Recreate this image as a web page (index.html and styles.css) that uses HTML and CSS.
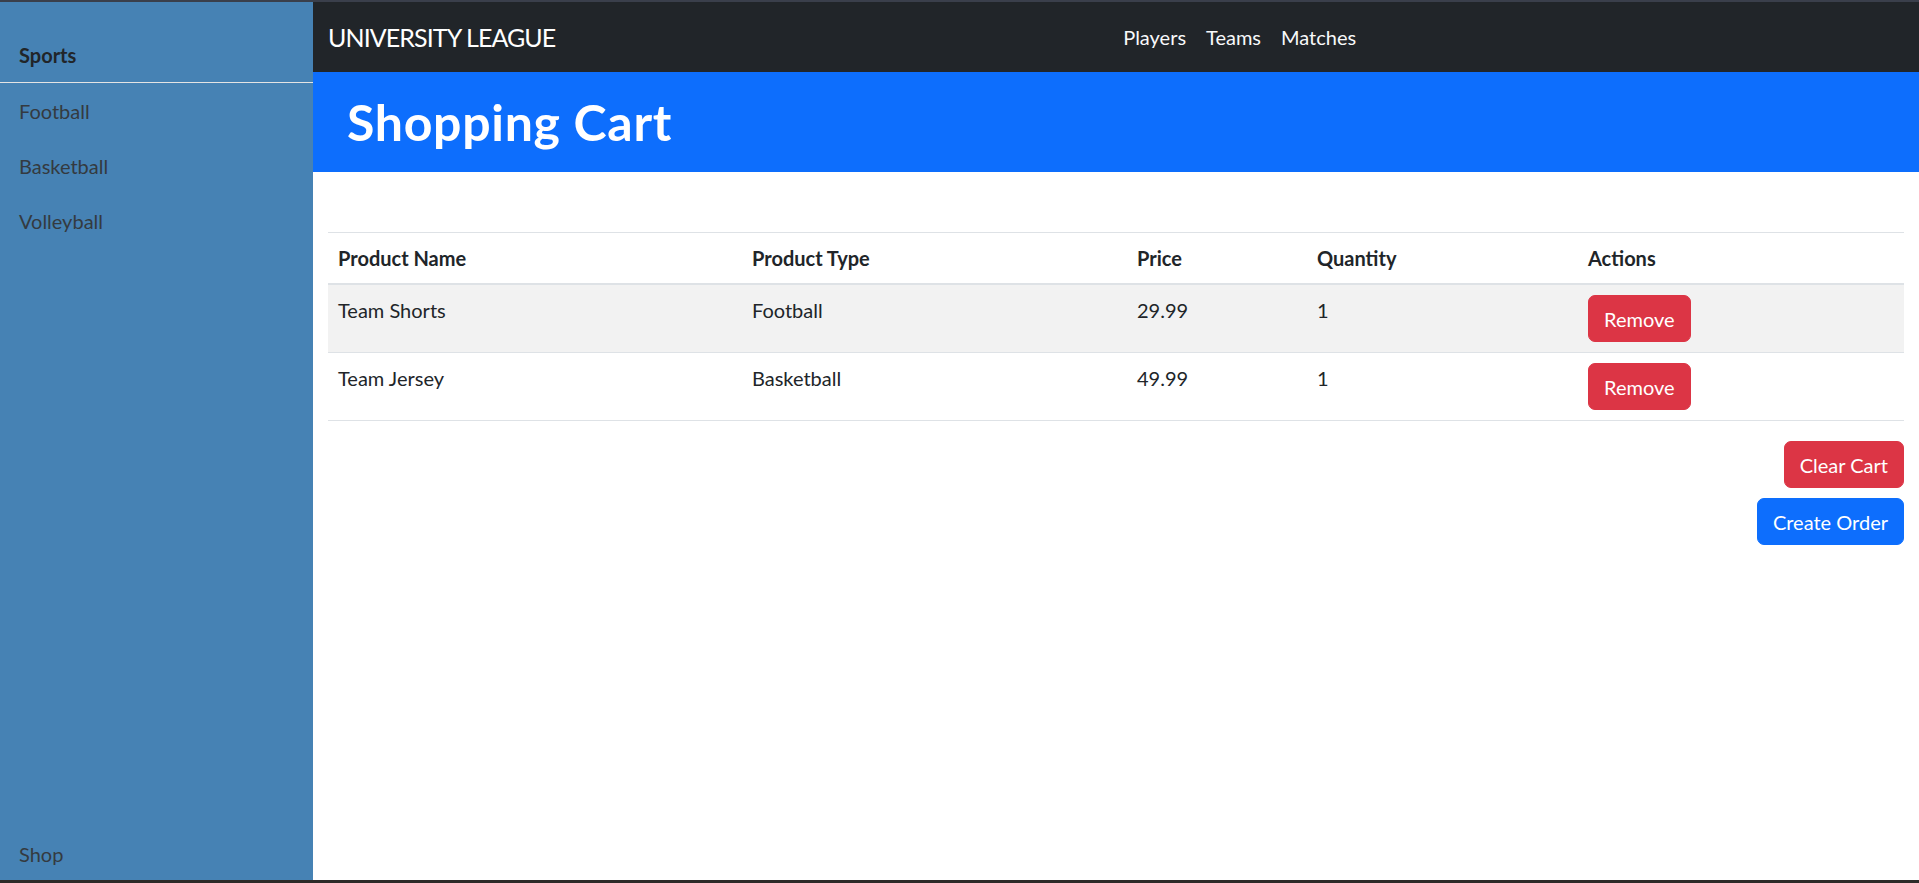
FILE: index.html
```html
<!DOCTYPE html>
<html lang="en">
<head>
<meta charset="utf-8">
<title>Shopping Cart</title>
<link rel="stylesheet" href="styles.css">
</head>
<body>
<div class="screen">
  <div class="frame-top"></div>
  <div class="app">
    <aside class="sidebar">
      <div class="side-title">Sports</div>
      <ul class="side-nav">
        <li class="side-item">Football</li>
        <li class="side-item">Basketball</li>
        <li class="side-item">Volleyball</li>
      </ul>
      <div class="side-foot">Shop</div>
    </aside>
    <div class="main">
      <nav class="topbar">
        <span class="brand">UNIVERSITY LEAGUE</span>
        <ul class="top-links">
          <li class="top-link">Players</li>
          <li class="top-link">Teams</li>
          <li class="top-link">Matches</li>
        </ul>
      </nav>
      <header class="hero">
        <h1 class="hero-title">Shopping Cart</h1>
      </header>
      <section class="content">
        <table class="cart">
          <colgroup>
            <col class="c-name">
            <col class="c-type">
            <col class="c-price">
            <col class="c-qty">
            <col class="c-act">
          </colgroup>
          <thead>
            <tr>
              <th>Product Name</th>
              <th>Product Type</th>
              <th>Price</th>
              <th>Quantity</th>
              <th>Actions</th>
            </tr>
          </thead>
          <tbody>
            <tr class="striped">
              <td>Team Shorts</td>
              <td>Football</td>
              <td>29.99</td>
              <td>1</td>
              <td><button class="btn btn-danger">Remove</button></td>
            </tr>
            <tr>
              <td>Team Jersey</td>
              <td>Basketball</td>
              <td>49.99</td>
              <td>1</td>
              <td><button class="btn btn-danger">Remove</button></td>
            </tr>
          </tbody>
        </table>
        <div class="cart-actions">
          <button class="btn btn-danger">Clear Cart</button>
          <button class="btn btn-primary">Create Order</button>
        </div>
      </section>
    </div>
  </div>
  <div class="taskbar"></div>
</div>
</body>
</html>
```

FILE: styles.css
```css
* { box-sizing: border-box; }

html, body {
  margin: 0;
  padding: 0;
  height: 883px;
  overflow: hidden;
  background: #fff;
}

body {
  font-family: Lato, "Noto Sans", "Liberation Sans", sans-serif;
  font-size: 20px;
  line-height: 30px;
  color: #212529;
}

.screen {
  display: flex;
  flex-direction: column;
  height: 883px;
}

.frame-top {
  height: 2px;
  background: #3a3f4b;
  flex: none;
}

.taskbar {
  height: 3px;
  background: #2d2a28;
  flex: none;
}

.app {
  flex: 1;
  display: flex;
  min-height: 0;
}

/* Sidebar */
.sidebar {
  width: 313px;
  flex: none;
  background: #4682b4;
  display: flex;
  flex-direction: column;
}

.side-title {
  padding: 38px 20px 12px 19px;
  font-weight: 700;
  color: #212529;
  border-bottom: 1px solid #e4e4e4;
}

.side-nav {
  list-style: none;
  margin: 0;
  padding: 0;
}

.side-item {
  padding: 13px 20px 12px 19px;
  color: #343a40;
}

.side-foot {
  margin-top: auto;
  padding: 0 20px 11px 19px;
  color: #343a40;
}

/* Main */
.main {
  flex: 1;
  display: flex;
  flex-direction: column;
  min-width: 0;
}

.topbar {
  height: 70px;
  flex: none;
  background: #212529;
  display: flex;
  align-items: center;
  padding: 0 15px;
}

.brand {
  font-size: 25px;
  line-height: 37px;
  letter-spacing: -0.9px;
  color: #fff;
  margin-right: 20px;
}

.top-links {
  list-style: none;
  display: flex;
  margin: 0 auto;
  padding: 0;
}

.top-link {
  padding: 0 10px;
  color: #f8f9fa;
}

.hero {
  height: 100px;
  flex: none;
  background: #0d6efd;
  display: flex;
  align-items: center;
  padding: 0 34px;
}

.hero-title {
  margin: 0;
  font-size: 50px;
  line-height: 60px;
  font-weight: 700;
  letter-spacing: 0.7px;
  color: #fff;
}

.content {
  padding: 60px 15px 0;
}

/* Table */
.cart {
  width: 100%;
  border-collapse: collapse;
  table-layout: fixed;
  border-top: 1px solid #dee2e6;
  margin-bottom: 20px;
}

.c-name { width: 414px; }
.c-type { width: 385px; }
.c-price { width: 180px; }
.c-qty { width: 271px; }
.c-act { width: auto; }

.cart th,
.cart td {
  padding: 10px;
  text-align: left;
  vertical-align: top;
}

.cart th {
  font-weight: 700;
  border-bottom: 2px solid #dee2e6;
}

.cart td {
  border-bottom: 1px solid #dee2e6;
}

.cart .striped td {
  background: #f2f2f2;
}

.btn {
  font-family: inherit;
  font-size: 20px;
  line-height: 30px;
  padding: 7.5px 15px;
  border: 1px solid transparent;
  border-radius: 7px;
  color: #fff;
  cursor: pointer;
  display: inline-block;
}

.btn-danger {
  background: #dc3545;
  border-color: #dc3545;
}

.btn-primary {
  background: #0d6efd;
  border-color: #0d6efd;
}

.cart-actions {
  display: flex;
  flex-direction: column;
  align-items: flex-end;
  gap: 10px;
}
```
